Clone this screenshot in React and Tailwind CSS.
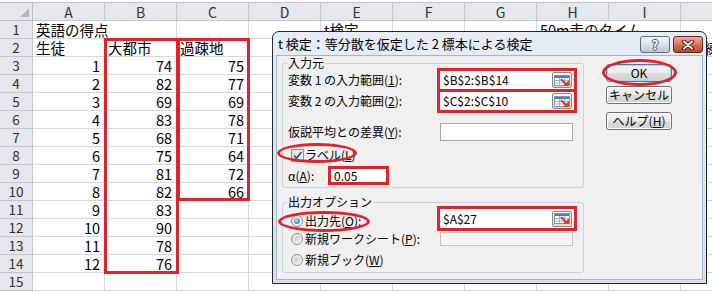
import React from 'react';

const COLS = ['A', 'B', 'C', 'D', 'E', 'F', 'G', 'H', 'I', 'J'];
const RED = 'border-[#e5202a]';

const B_VALS = [74, 82, 69, 83, 68, 75, 81, 82, 83, 90, 78, 76];
const C_VALS = [75, 77, 69, 78, 71, 64, 72, 66];

// sheet contents, row by row (15 visible rows)
const ROWS = [
  { A: { t: '英語の得点', span: 2 }, E: { t: 't検定' }, H: { t: '50m走のタイム', span: 2 } },
  { A: { t: '生徒' }, B: { t: '大都市' }, C: { t: '過疎地' }, J: { t: '練習', cls: 'pl-[23px]' } },
  ...B_VALS.map((b, i) => ({
    A: { t: i + 1 },
    B: { t: b },
    ...(C_VALS[i] !== undefined ? { C: { t: C_VALS[i] } } : {}),
  })),
  {},
];

function SheetRow({ n, cells }) {
  const out = [];
  for (let i = 0; i < COLS.length; i++) {
    const col = COLS[i];
    const c = cells[col];
    const isNum = c && typeof c.t === 'number';
    out.push(
      <div
        key={col}
        className={`h-[18px] border-r border-b border-[#d8d8d8] flex items-center pt-[2px] whitespace-nowrap text-[14.5px] leading-none ${
          c && c.span === 2 ? 'col-span-2' : ''
        } ${isNum ? 'justify-end pr-[4px]' : 'pl-[3px]'} ${c && c.cls ? c.cls : ''}`}
      >
        {c ? c.t : ''}
      </div>
    );
    if (c && c.span === 2) i++;
  }
  return (
    <div className="grid grid-cols-[33px_repeat(10,72px)]">
      <div className="h-[18px] bg-[#e4e7eb] border-r border-b border-[#c3c8ce] flex items-center justify-center text-[13.5px] text-[#333] leading-none">
        {n}
      </div>
      {out}
    </div>
  );
}

function Sheet() {
  return (
    <div className="w-[753px] pt-[2px]">
      <div className="grid grid-cols-[33px_repeat(10,72px)] h-[19px]">
        <div className="bg-[#e4e7eb] border-t border-r border-b border-[#b9bfc6] flex items-end justify-end pr-[3px] pb-[3px]">
          <svg width="9" height="9" viewBox="0 0 9 9">
            <polygon points="9,0 9,9 0,9" fill="#b5bac1" />
          </svg>
        </div>
        {COLS.map((c) => (
          <div
            key={c}
            className="bg-[#e4e7eb] border-t border-r border-b border-[#c3c8ce] flex items-center justify-center text-[14px] text-[#333] leading-none"
          >
            {c}
          </div>
        ))}
      </div>
      {ROWS.map((cells, i) => (
        <SheetRow key={i} n={i + 1} cells={cells} />
      ))}
    </div>
  );
}

function RangeButton() {
  return (
    <div className="w-[20px] h-[16px] shrink-0 rounded-[2px] border border-[#8a8a8a] bg-gradient-to-b from-[#f8f8f8] to-[#d9d9d9] flex items-center justify-center">
      <svg width="16" height="11" viewBox="0 0 16 11">
        <rect x="0.5" y="0.5" width="15" height="10" fill="#fff" stroke="#8196b0" />
        <rect x="1" y="1" width="14" height="2" fill="#4b7dc2" />
        <path d="M1 5.5h14M1 8h14M5.5 3v7M10.5 3v7" stroke="#9bb7dc" />
        <path d="M7 4l5 5" stroke="#d9431f" strokeWidth="2.2" />
        <polygon points="15,11 9,11 15,5" fill="#d9431f" />
      </svg>
    </div>
  );
}

function RangeInput({ value }) {
  return (
    <div className="h-[18px] bg-white flex items-center pl-[3px] pr-[2px]">
      <span className="text-[12px] leading-none">{value}</span>
      <div className="ml-auto">
        <RangeButton />
      </div>
    </div>
  );
}

function Radio({ checked }) {
  return (
    <div className="w-[12px] h-[12px] shrink-0 rounded-full border border-[#8c8c8c] bg-gradient-to-br from-[#e2e2e2] to-[#fdfdfd] flex items-center justify-center">
      {checked ? (
        <div className="w-[6px] h-[6px] rounded-full bg-[radial-gradient(circle_at_40%_35%,#a6dbff,#1668be)]" />
      ) : (
        <div className="w-[7px] h-[7px] rounded-full bg-gradient-to-br from-[#c9c9c9] to-[#f1f1f1]" />
      )}
    </div>
  );
}

function Button({ children, focused }) {
  return (
    <div
      className={`relative w-[66px] h-[18px] rounded-[3px] border flex items-center justify-center text-[12px] leading-none bg-[linear-gradient(#f3f3f3_0%,#ebebeb_50%,#dddddd_50%,#d1d1d1_100%)] ${
        focused ? 'border-[#3c7fb1] shadow-[inset_0_0_0_1px_#9fd8f4]' : 'border-[#707070] shadow-[inset_0_0_0_1px_#fbfbfb]'
      }`}
    >
      {children}
    </div>
  );
}

function Dialog() {
  return (
    <div className="absolute left-[272px] top-[31px] w-[435px] h-[253px] flex flex-col rounded-t-[7px] border border-[#262626] bg-gradient-to-b from-[#e6edf6] to-[#d2e0ef] px-[3px] pb-[3px] text-[12px]">
      {/* title bar */}
      <div className="h-[23px] flex items-start">
        <span className="pl-[2px] pt-[3px] text-[13px] leading-[17px]">t 検定：等分散を仮定した 2 標本による検定</span>
        <div className="ml-auto mt-[4px] flex gap-[3px]">
          <div className="w-[30px] h-[17px] rounded-[3px] border border-[#5d6d82] bg-gradient-to-b from-[#f1f5fa] via-[#d6e2ef] to-[#b7c9de] flex items-center justify-center text-[13px] font-bold leading-none text-white [text-shadow:1px_0_#505a66,-1px_0_#505a66,0_1px_#505a66,0_-1px_#505a66]">
            ?
          </div>
          <div className="w-[30px] h-[17px] rounded-[3px] border border-[#6b2418] bg-gradient-to-b from-[#eab0a2] via-[#d6725d] to-[#bf3f27] flex items-center justify-center">
            <svg width="12" height="10" viewBox="0 0 12 10">
              <path d="M2 1.5l8 7M10 1.5l-8 7" stroke="#4a140c" strokeWidth="4" strokeLinecap="round" />
              <path d="M2 1.5l8 7M10 1.5l-8 7" stroke="#fff" strokeWidth="2" strokeLinecap="round" />
            </svg>
          </div>
        </div>
      </div>

      {/* body */}
      <div className="flex-1 flex bg-[#f0f0f0] border border-[#9fb6cf] pl-[5px]">
        <div className="w-[302px] flex flex-col">
          {/* 入力元 group */}
          <div className="relative mt-[7px] border border-[#c9d3db] rounded-[3px] pl-[5px] pt-[4px] pb-[2px]">
            <span className="absolute left-[4px] -top-[8px] px-[1px] bg-[#f0f0f0] leading-[14px]">入力元</span>
            <div className="flex">
              <div className="w-[149px] pt-[3px] flex flex-col gap-[3px]">
                <div className="h-[18px] flex items-center">
                  変数 1 の入力範囲(<span className="underline">1</span>):
                </div>
                <div className="h-[18px] flex items-center">
                  変数 2 の入力範囲(<span className="underline">2</span>):
                </div>
              </div>
              <div className={`w-[140px] border-[3px] ${RED} flex flex-col`}>
                <RangeInput value="$B$2:$B$14" />
                <div className="h-[3px] bg-[#e5202a]" />
                <RangeInput value="$C$2:$C$10" />
              </div>
            </div>
            <div className="mt-[10px] h-[18px] flex items-center">
              <div className="w-[152px]">
                仮説平均との差異(<span className="underline">Y</span>):
              </div>
              <div className="w-[133px] h-[18px] border border-[#a9a9a9] bg-white" />
            </div>
            <div className="relative mt-[5px] h-[18px] flex items-center pl-[3px]">
              <div className="w-[13px] h-[13px] border border-[#8e8f8f] bg-gradient-to-br from-[#dedede] to-[#fbfbfb] flex items-center justify-center">
                <svg width="11" height="11" viewBox="0 0 11 11">
                  <path d="M2 5.5l2.5 2.8L9.5 2" fill="none" stroke="#2b4d86" strokeWidth="1.7" />
                </svg>
              </div>
              <span className="ml-[1px]">
                ラベル(<span className="underline">L</span>)
              </span>
              <div className={`absolute -left-[11px] -top-[3px] w-[80px] h-[20px] rounded-[50%] border-[3px] ${RED}`} />
            </div>
            <div className="mt-[2px] h-[19px] flex items-center">
              <div className="w-[40px]">
                α(<span className="underline">A</span>):
              </div>
              <div className={`w-[61px] h-[19px] border-[3px] ${RED} bg-white flex items-center pl-[3px] leading-none`}>0.05</div>
            </div>
          </div>

          {/* 出力オプション group */}
          <div className="relative mt-[14px] border border-[#c9d3db] rounded-[3px] pl-[5px] pt-[3px] pb-[3px]">
            <span className="absolute left-[4px] -top-[8px] px-[1px] bg-[#f0f0f0] leading-[14px]">出力オプション</span>
            <div className="relative h-[25px] flex">
              <div className="w-[149px] pl-[3px] pt-[5px] flex items-center">
                <Radio checked />
                <span className="ml-[2px]">
                  出力先(<span className="underline">O</span>):
                </span>
              </div>
              <div className={`w-[140px] h-[25px] border-[3px] ${RED} bg-white flex items-center pl-[3px] pr-[2px]`}>
                <span className="leading-none">$A$27</span>
                <div className="ml-auto">
                  <RangeButton />
                </div>
              </div>
              <div className={`absolute -left-[10px] top-[5px] w-[92px] h-[21px] rounded-[50%] border-[3px] ${RED}`} />
            </div>
            <div className="mt-[1px] h-[14px] flex items-center">
              <div className="w-[152px] pl-[3px] flex items-center">
                <Radio />
                <span className="ml-[2px]">
                  新規ワークシート(<span className="underline">P</span>):
                </span>
              </div>
              <div className="w-[133px] h-[14px] border border-[#c4c4c4] bg-[#f5f5f5]" />
            </div>
            <div className="mt-[5px] h-[18px] flex items-center pl-[3px]">
              <Radio />
              <span className="ml-[2px]">
                新規ブック(<span className="underline">W</span>)
              </span>
            </div>
          </div>
        </div>

        {/* buttons */}
        <div className="ml-[22px] pt-[8px] flex flex-col">
          <Button focused>
            OK
            <div className={`absolute -left-[5px] -top-[6px] w-[75px] h-[27px] rounded-[50%] border-[3px] ${RED}`} />
          </Button>
          <div className="mt-[4px]">
            <Button>キャンセル</Button>
          </div>
          <div className="mt-[8px]">
            <Button>
              ヘルプ(<span className="underline">H</span>)
            </Button>
          </div>
        </div>
      </div>
    </div>
  );
}

export default function App() {
  return (
    <div className="relative w-[712px] h-[292px] overflow-hidden bg-white text-black font-['Noto_Sans_CJK_JP',sans-serif]">
      <Sheet />
      {/* annotation boxes over columns B and C */}
      <div className={`absolute left-[104px] top-[38px] w-[75px] h-[236px] border-[3px] ${RED}`} />
      <div className={`absolute left-[177px] top-[38px] w-[73px] h-[163px] border-[3px] ${RED}`} />
      <Dialog />
    </div>
  );
}
